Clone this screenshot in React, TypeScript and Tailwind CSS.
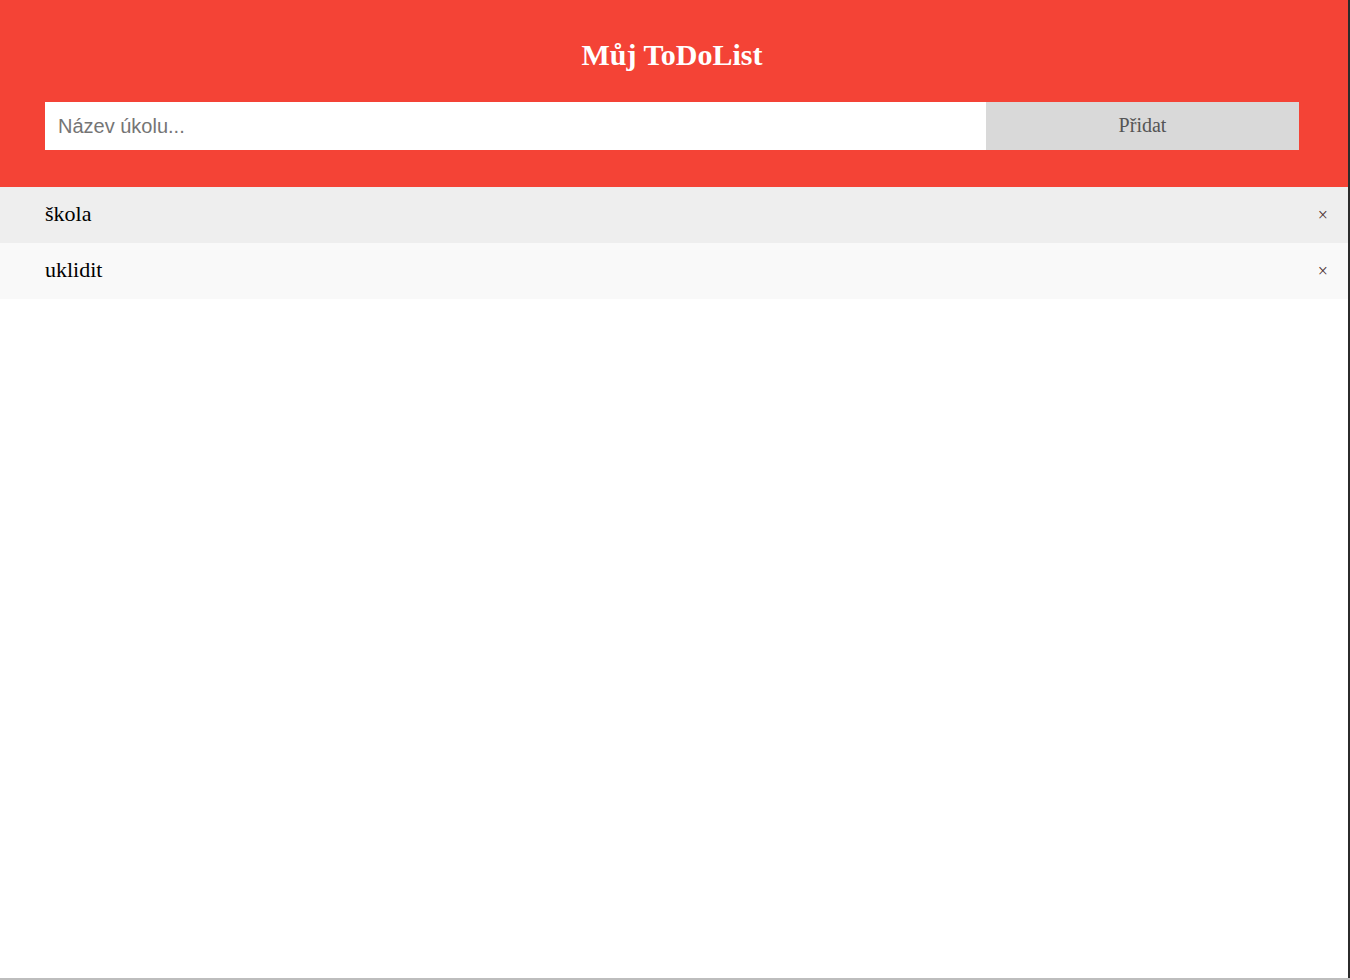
import React, { useState } from 'react';

function App() {
  const [tasks] = useState<string[]>(['škola', 'uklidit']);

  return (
    <div className="h-[980px] w-[1350px] flex flex-col bg-white">
      <div className="flex-1 flex">
        <div className="w-[1348px] flex flex-col">
          {/* Header */}
          <div className="bg-[#f44336] pt-[38px] pb-[37px] pl-[45px] pr-[49px]">
            <h2 className="text-center text-white font-bold text-[30px] leading-[34px] mb-[30px] font-['Liberation_Serif',serif]">
              Můj ToDoList
            </h2>
            <div className="flex">
              <input
                type="text"
                placeholder="Název úkolu..."
                className="flex-1 h-[48px] bg-white px-[13px] text-[20px] outline-none placeholder:text-[#757575] font-['Liberation_Sans',Arial,sans-serif]"
              />
              <button className="w-[313px] h-[48px] pb-[2px] bg-[#d9d9d9] text-[#555] text-[20px] font-['Liberation_Serif',serif]">
                Přidat
              </button>
            </div>
          </div>

          {/* List */}
          <ul className="font-['Liberation_Serif',serif]">
            {tasks.map((task, i) => (
              <li
                key={i}
                className={`h-[56px] flex items-center justify-between pl-[45px] pr-[20px] text-[22px] text-black ${
                  i % 2 === 0 ? 'bg-[#eeeeee]' : 'bg-[#f9f9f9]'
                }`}
              >
                <span className="-mt-[4px]">{task}</span>
                <span className="text-[18px] text-[#4a3030] leading-none">×</span>
              </li>
            ))}
          </ul>
        </div>
        <div className="w-[2px] bg-[#2b2b2b]" />
      </div>
      <div className="h-[2px] bg-[#bdbdbd]" />
    </div>
  );
}

export default App;
